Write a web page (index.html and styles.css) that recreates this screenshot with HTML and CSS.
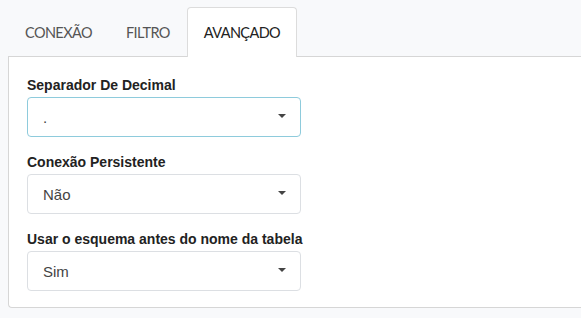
FILE: index.html
```html
<!DOCTYPE html>
<html lang="pt-BR">
<head>
<meta charset="utf-8">
<title>Avançado</title>
<link rel="stylesheet" href="styles.css">
</head>
<body>
<div class="tabs-wrap">
  <ul class="tabs">
    <li class="tab">CONEXÃO</li>
    <li class="tab">FILTRO</li>
    <li class="tab active">AVANÇADO</li>
  </ul>
  <div class="panel">
    <div class="group">
      <label class="label">Separador De Decimal</label>
      <div class="select focused"><span class="value">.</span><span class="caret"></span></div>
    </div>
    <div class="group">
      <label class="label">Conexão Persistente</label>
      <div class="select"><span class="value">Não</span><span class="caret"></span></div>
    </div>
    <div class="group">
      <label class="label">Usar o esquema antes do nome da tabela</label>
      <div class="select"><span class="value">Sim</span><span class="caret"></span></div>
    </div>
  </div>
</div>
</body>
</html>
```
FILE: styles.css
```css
html, body {
  margin: 0;
  padding: 0;
  background: #f8f9fb;
}
body {
  padding: 7px 0 0 8px;
  overflow: hidden;
}
.tabs-wrap {
  width: 573px;
}
.tabs {
  list-style: none;
  margin: 0;
  padding: 0;
  display: flex;
  height: 49px;
}
.tab {
  font-family: Lato, "Open Sans", sans-serif;
  font-size: 14.5px;
  letter-spacing: -0.6px;
  color: #555;
  padding: 0 16px;
  display: flex;
  align-items: center;
  border: 1px solid transparent;
  border-bottom: none;
  border-radius: 4px 4px 0 0;
  margin-bottom: -1px;
  height: 49px;
  box-sizing: border-box;
}
.tab.active {
  background: #fff;
  border-color: #dcdcdc;
  color: #222;
  height: 50px;
  position: relative;
  z-index: 1;
}
.panel {
  background: #fff;
  border: 1px solid #d6d6d6;
  border-right: none;
  border-radius: 0 0 0 4px;
  padding: 18px 18px 16px 18px;
}
.group {
  margin-bottom: 15px;
}
.group:last-child {
  margin-bottom: 0;
}
.label {
  display: block;
  font-family: "Liberation Sans", Arial, sans-serif;
  font-weight: bold;
  font-size: 14px;
  line-height: 20px;
  color: #222;
  margin-bottom: 2px;
}
.select {
  width: 274px;
  height: 40px;
  box-sizing: border-box;
  border: 1px solid #dcdfe3;
  border-radius: 4px;
  display: flex;
  align-items: center;
  justify-content: space-between;
  padding: 0 14px 0 15px;
  font-family: "Liberation Sans", Arial, sans-serif;
  font-size: 15px;
  color: #444;
  background: #fff;
}
.select.focused {
  border-color: #8ecbdc;
}
.caret {
  width: 0;
  height: 0;
  border-left: 4px solid transparent;
  border-right: 4px solid transparent;
  border-top: 4px solid #444;
  margin-top: -2px;
}
```
